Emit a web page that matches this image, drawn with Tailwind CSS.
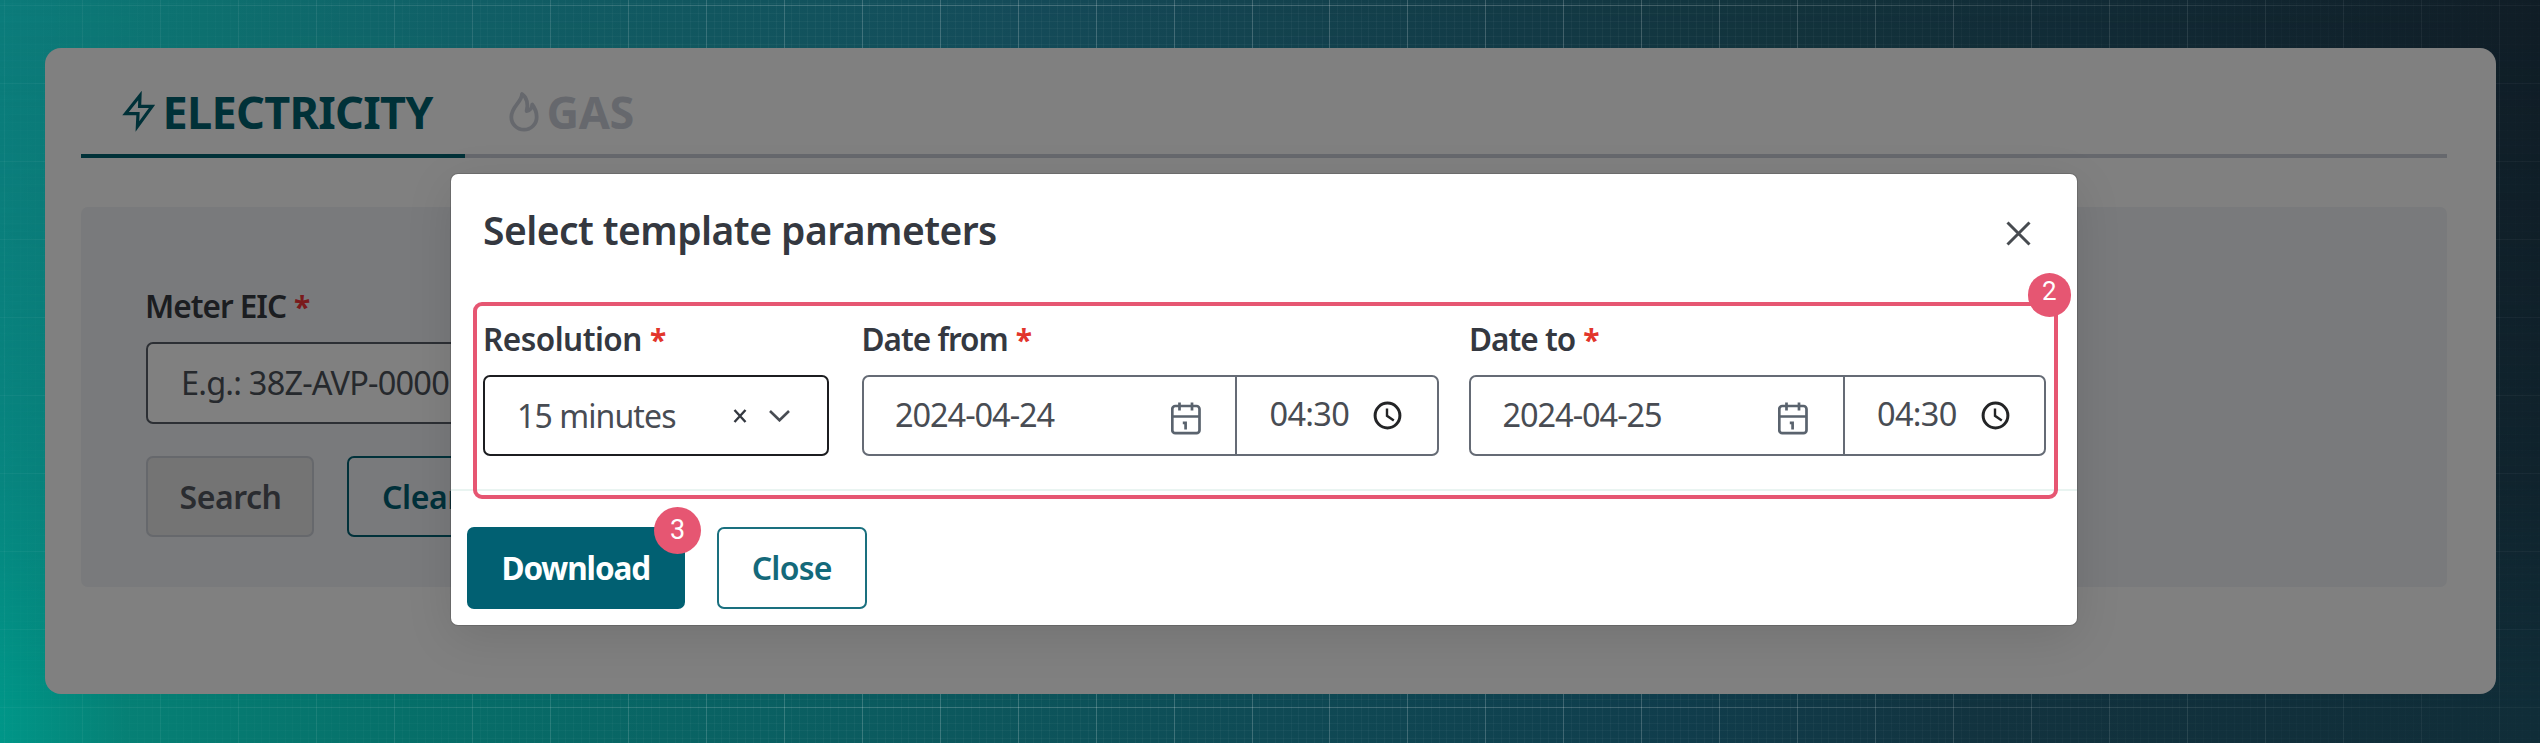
<!DOCTYPE html>
<html lang="en">
<head>
<meta charset="utf-8">
<title>Select template parameters</title>
<script src="https://cdn.jsdelivr.net/npm/@tailwindcss/browser@4"></script>
</head>
<body class="font-['Noto_Sans',sans-serif]">
<div class="relative h-[743px] w-[2540px] overflow-hidden bg-[linear-gradient(90deg,#009688_0%,#068075_5%,#066f69_16%,#0a6062_30%,#0f4a55_50%,#103d4c_66%,#12333f_78%,#102d38_100%)]">
  <!-- Backdrop: darker upper gradient and graph-paper grid -->
  <div class="absolute inset-0 bg-[linear-gradient(90deg,#0b7b7a_0%,#0d706f_8%,#105f66_18%,#11565f_28%,#144b59_40%,#13434f_50%,#123a46_60%,#12333c_70%,#112b36_82%,#101d26_100%)] [mask-image:linear-gradient(180deg,#000_0%,#000d_30%,#0009_65%,#0000_95%)]"></div>
  <div class="absolute inset-0 bg-[repeating-linear-gradient(90deg,#ffffff09_0,#ffffff09_1px,transparent_1px,transparent_7.797px),repeating-linear-gradient(180deg,#ffffff09_0,#ffffff09_1px,transparent_1px,transparent_7.8px)] bg-[position:4px_5px] [mask-image:linear-gradient(90deg,#0004,#000_30%,#000_65%,#0003)]"></div>
  <div class="absolute inset-0 bg-[repeating-linear-gradient(90deg,#ffffff2c_0,#ffffff2c_1px,transparent_1px,transparent_77.97px),repeating-linear-gradient(180deg,#ffffff2c_0,#ffffff2c_1px,transparent_1px,transparent_78px)] bg-[position:4px_5px] [mask-image:linear-gradient(90deg,#0003,#0005_10%,#000_36%,#000_65%,#0004_94%,#0003)]"></div>

  <!-- Dimmed page -->
  <main class="relative ml-[45px] mt-[48px] h-[646px] w-[2450.5px] rounded-[16px] bg-[#808080] pl-[36px] pr-[48.5px]">
    <nav class="flex h-[109.5px] text-[45px] leading-none font-bold">
      <div class="flex w-[384px] items-center gap-[8px] border-b-[4px] border-[#003138] pl-[40.5px] pt-[21px] text-[#003138]">
        <svg class="h-[42px] w-[33px] shrink-0" viewBox="0 0 33 42" fill="none" stroke="currentColor" stroke-width="3.2"><path d="M18 5.5L3.6 23.6H16L15.4 36.5L30 16.4H17.6Z"/></svg>
        <span class="tracking-[-0.7px]">ELECTRICITY</span>
      </div>
      <div class="flex flex-1 items-center gap-[8px] border-b-[4px] border-[#66686d] pl-[43.5px] pt-[21px] text-[#66686d]">
        <svg class="h-[41px] w-[30px] shrink-0" viewBox="0 0 30 41" fill="none" stroke="currentColor" stroke-width="3.8" stroke-linejoin="round"><path d="M13 3C13 11 2.3 15.5 2.3 26A12.7 12.7 0 0 0 27.7 26C27.7 20.5 25.5 16.5 23.2 13.5C23.2 16.5 21 19.5 17.6 20C19.5 13.5 18 6.5 13 3Z"/></svg>
        <span class="tracking-[-0.4px]">GAS</span>
      </div>
    </nav>
    <section class="mt-[49px] h-[380px] w-full rounded-[7px] bg-[#797a7c] pl-[65px] pt-[81px]">
      <label class="-ml-[1px] block h-[36px] text-[31.5px] leading-[36px] font-semibold tracking-[-1px] text-[#1b1d21]">Meter EIC<span class="ml-[8px] text-[30px] leading-none font-bold text-[#7a1a1c]">*</span></label>
      <div class="mt-[18px] flex h-[82px] w-[700px] items-center rounded-[7px] border-2 border-[#2c2f34] bg-[#808080] pl-[33px] pt-px text-[32.5px] tracking-[-0.8px] text-[#26292d]">E.g.: 38Z-AVP-0000</div>
      <div class="mt-[32px] flex gap-[33px] text-[32px] font-semibold">
        <div class="flex h-[81px] w-[168px] items-center justify-center rounded-[7px] border-2 border-[#66686c] bg-[#747474] pt-px pl-px tracking-[-0.5px] text-[#2a2c30]">Search</div>
        <div class="flex h-[81px] items-center rounded-[7px] border-2 border-[#00313a] px-[33px] pt-px tracking-[-0.4px] text-[#00303a]">Clear</div>
      </div>
    </section>
  </main>

  <!-- Dialog -->
  <div class="absolute left-[450.5px] top-[173.5px] flex h-[451.5px] w-[1626.5px] flex-col rounded-[7px] bg-white text-[#343840] shadow-[0_0_0_1px_#00000022,0_12px_48px_#0000001c]">
    <header class="flex h-[147px] justify-between pl-[32.5px] pr-[46px]">
      <h1 class="pt-[30px] text-[39px] leading-[52px] font-semibold tracking-[-0.55px]">Select template parameters</h1>
      <svg class="mt-[47.5px] size-[25px]" viewBox="0 0 25 25" fill="none" stroke="#474b50" stroke-width="3"><path d="M1.5 1.5L23.5 23.5M23.5 1.5L1.5 23.5"/></svg>
    </header>
    <div class="flex h-[170px] border-b-2 border-[#e9f4f1] pl-[32.5px]">
      <div class="w-[345.5px]">
        <label class="block h-[36px] text-[31.5px] leading-[36px] font-semibold tracking-[-0.5px]">Resolution<span class="ml-[8px] text-[30px] leading-none font-bold text-[#e2352b]">*</span></label>
        <div class="mt-[18px] flex h-[81.5px] items-center rounded-[7px] border-2 border-[#1c1d20] pl-[32px] pt-px text-[32px] tracking-[-0.9px] text-[#484c53]">
          <span class="w-[216px]">15 minutes</span>
          <svg class="mr-[22px] size-[14px]" viewBox="0 0 14 14" fill="none" stroke="#343840" stroke-width="2.4"><path d="M1.5 1L12.5 13M12.5 1L1.5 13"/></svg>
          <svg class="h-[12px] w-[21px]" viewBox="0 0 21 12" fill="none" stroke="#484c53" stroke-width="2.6"><path d="M1 1L10.5 10.3L20 1"/></svg>
        </div>
      </div>
      <div class="ml-[33px] w-[577px]">
        <label class="block h-[36px] text-[31.5px] leading-[36px] font-semibold tracking-[-1px]">Date from<span class="ml-[8px] text-[30px] leading-none font-bold text-[#e2352b]">*</span></label>
        <div class="mt-[18px] flex h-[81.5px] items-center rounded-[7px] border-2 border-[#656b75] text-[#484c53]">
          <span class="w-[307px] pl-[31.5px] pt-px text-[32.5px] tracking-[-1.05px]">2024-04-24</span>
          <svg class="mt-[6px] h-[33px] w-[30px]" viewBox="0 0 30 33" fill="none" stroke="#5a636e" stroke-width="2.7"><rect x="1.3" y="4" width="27.2" height="27.2" rx="3"/><path d="M8.5 0.5V8.5M21 0.5V8.5M1.3 14.5H28.5"/><path d="M11.8 20.8H14.6V27.5"/></svg>
          <div class="ml-[34.5px] h-full w-[2px] bg-[#656b75]"></div>
          <span class="w-[105px] shrink-0 whitespace-nowrap pb-[2px] pl-[32.5px] text-[32.5px] tracking-[-0.7px]">04:30</span>
          <svg class="ml-[31px] size-[29px]" viewBox="0 0 29 29" fill="none" stroke="#232426" stroke-width="3"><circle cx="14.5" cy="14.5" r="12.4"/><path stroke-width="2.4" d="M14 7.5V14.8L20.8 19.5"/></svg>
        </div>
      </div>
      <div class="ml-[30.5px] w-[577px]">
        <label class="block h-[36px] text-[31.5px] leading-[36px] font-semibold tracking-[-1px]">Date to<span class="ml-[8px] text-[30px] leading-none font-bold text-[#e2352b]">*</span></label>
        <div class="mt-[18px] flex h-[81.5px] items-center rounded-[7px] border-2 border-[#656b75] text-[#484c53]">
          <span class="w-[307px] pl-[31.5px] pt-px text-[32.5px] tracking-[-1.05px]">2024-04-25</span>
          <svg class="mt-[6px] h-[33px] w-[30px]" viewBox="0 0 30 33" fill="none" stroke="#5a636e" stroke-width="2.7"><rect x="1.3" y="4" width="27.2" height="27.2" rx="3"/><path d="M8.5 0.5V8.5M21 0.5V8.5M1.3 14.5H28.5"/><path d="M11.8 20.8H14.6V27.5"/></svg>
          <div class="ml-[34.5px] h-full w-[2px] bg-[#656b75]"></div>
          <span class="w-[105px] shrink-0 whitespace-nowrap pb-[2px] pl-[32.5px] text-[32.5px] tracking-[-0.7px]">04:30</span>
          <svg class="ml-[31px] size-[29px]" viewBox="0 0 29 29" fill="none" stroke="#232426" stroke-width="3"><circle cx="14.5" cy="14.5" r="12.4"/><path stroke-width="2.4" d="M14 7.5V14.8L20.8 19.5"/></svg>
        </div>
      </div>
    </div>
    <footer class="flex gap-[32px] pl-[16.5px] pt-[36.5px]">
      <div class="flex h-[82px] w-[217.5px] items-center justify-center rounded-[7px] bg-[#016072] text-[31.5px] font-bold tracking-[-1.1px] text-white">Download</div>
      <div class="flex h-[82px] w-[150.5px] items-center justify-center rounded-[7px] border-2 border-[#1a707f] text-[32px] font-semibold tracking-[-0.7px] text-[#14697a]">Close</div>
    </footer>
  </div>

  <!-- Callouts -->
  <div class="absolute left-[473px] top-[301.5px] h-[197.5px] w-[1585px] rounded-[9px] border-[4px] border-[#e65672]"></div>
  <div class="absolute left-[2027.5px] top-[273px] flex size-[43.5px] justify-center rounded-full bg-[#e65672] pt-[2px] font-['Roboto'] text-[26px] leading-[32px] text-white">2</div>
  <div class="absolute left-[654px] top-[507px] flex size-[47px] items-center justify-center rounded-full bg-[#e65672] font-['Roboto'] text-[27px] text-white">3</div>
</div>
</body>
</html>
